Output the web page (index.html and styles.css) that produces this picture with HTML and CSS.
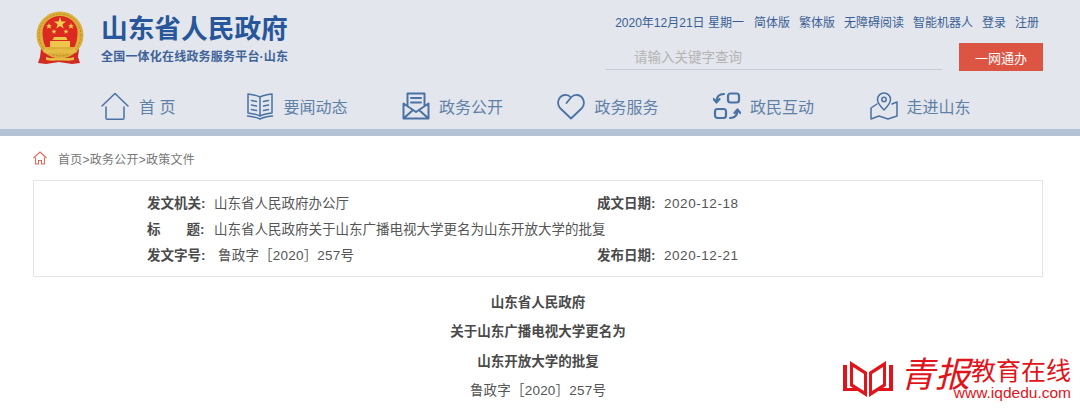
FILE: index.html
```html
<!DOCTYPE html>
<html lang="zh-CN">
<head>
  <meta charset="UTF-8" />
  <title>山东省人民政府</title>
  <link rel="stylesheet" href="styles.css">
</head>
<body>

  <!-- Header -->
  <header class="header">
    <div class="header-top">
      <svg class="emblem" viewBox="0 0 48 56">
        <path d="M5 38h38l-1 8 2 6-8 1-13-2-13 2-8-1 2-6z" fill="#d12a20"/>
        <circle cx="24" cy="24" r="23.500" fill="#dcae3c"/>
        <circle cx="24" cy="24" r="21" fill="none" stroke="#b98a25" stroke-width="1" stroke-dasharray="2 1.500"/>
        <path d="M6.500 21a17.500 16 0 0 1 35 0c0 6-1 11-3 15H9.500c-2-4-3-9-3-15z" fill="#dc2a20"/>
        <polygon points="24,6 25.500,10.500 30,10.500 26.400,13.200 27.700,17.600 24,15 20.300,17.600 21.600,13.200 18,10.500 22.500,10.500" fill="#f4d052"/>
        <polygon points="13,12 13.800,14.200 16,14.200 14.300,15.600 15,17.800 13,16.500 11,17.800 11.700,15.600 10,14.200 12.200,14.200" fill="#f4d052"/>
        <polygon points="35,12 35.800,14.200 38,14.200 36.300,15.600 37,17.800 35,16.500 33,17.800 33.700,15.600 32,14.200 34.200,14.200" fill="#f4d052"/>
        <polygon points="18,18 18.700,19.800 20.500,19.800 19.100,21 19.600,22.800 18,21.700 16.400,22.800 16.900,21 15.500,19.800 17.300,19.800" fill="#f4d052"/>
        <polygon points="30,18 30.700,19.800 32.500,19.800 31.100,21 31.600,22.800 30,21.700 28.400,22.800 28.900,21 27.500,19.800 29.300,19.800" fill="#f4d052"/>
        <path d="M18 26h12l1.500 3h-15zM14 30h20v6H14z" fill="#efc64c"/>
        <path d="M9 37c5 3 10 1 15 1s10 2 15-1l2 4c-5 3-11 1-17 1s-12 2-17-1z" fill="#e8bb45"/>
        <path d="M10 46c4 1.500 9 1 14 1s10 .5 14-1v3c-4 1-9 .5-14 .5s-10 .5-14-.5z" fill="#e8bb45"/>
      </svg>
      <div class="brand">
        <h1>山东省人民政府</h1>
        <p>全国一体化在线政务服务平台·山东</p>
      </div>
      <div class="tools">
        <div class="tool-links">
          <span class="today">2020年12月21日 星期一</span>
          <a>简体版</a>
          <a>繁体版</a>
          <a>无障碍阅读</a>
          <a>智能机器人</a>
          <a>登录</a>
          <a>注册</a>
        </div>
        <div class="search-row">
          <div class="search-box">请输入关键字查询</div>
          <button class="one-net">一网通办</button>
        </div>
      </div>
    </div>

    <nav class="nav">
      <a class="nav-item nav-home">
        <svg viewBox="0 0 28 28"><path d="M1 14L14 1.500 27 14M5 15v11c0 .8.500 1.200 1.200 1.200h15.600c.7 0 1.200-.4 1.200-1.200V15"/></svg>
        <span>首 页</span>
      </a>
      <a class="nav-item">
        <svg viewBox="0 0 28 28"><path d="M14 5C10 3 6 2.500 2 2v19c4 .5 8 1 12 3 4-2 8-2.500 12-3V2c-4 .5-8 1-12 3zM14 5v19M1.500 24c4 .5 8.500 1 12.500 3 4-2 8.500-2.500 12.500-3M5.500 8.500l5 1M5.500 13l5 1M5.500 17.500l5 1M17.500 9.500l5-1M17.500 14l5-1M17.500 18.500l5-1"/></svg>
        <span>要闻动态</span>
      </a>
      <a class="nav-item">
        <svg viewBox="0 0 28 28"><path d="M1.500 11.500v15h25v-15L14 20zM1.500 26.500L11 18M26.500 26.500L17 18M5.500 14V1.500h17V14M9 6h10M9 10.500h10" stroke-width="2"/></svg>
        <span>政务公开</span>
      </a>
      <a class="nav-item">
        <svg viewBox="0 0 28 28"><path d="M14 26.500L3 16C-.5 12 1 4 7.500 3c3-.4 5 .8 6.500 2.500L9.500 11M14 26.500L25 16c3.500-4 2-12-4.500-13-3-.4-5 .8-6.500 2.500" stroke-width="1.800"/></svg>
        <span>政务服务</span>
      </a>
      <a class="nav-item">
        <svg viewBox="0 0 28 28"><rect x="15" y="1.500" width="11" height="9" rx="2.500" stroke-width="2.200"/><rect x="2" y="17" width="11" height="9" rx="2.500" stroke-width="2.200"/><path d="M11 2C6 2 3.500 5 3.500 9.500M.5 7l3 3.500L6.500 7M17 26c5 0 7.500-3 7.500-7.500M21.500 21l3-3.500 3 3.500" stroke-width="2.200"/></svg>
        <span>政民互动</span>
      </a>
      <a class="nav-item nav-last">
        <svg viewBox="0 0 28 28"><path d="M14 18C10 14 7.500 11 7.500 7.500a6.500 6.500 0 0 1 13 0C20.500 11 18 14 14 18zM7 12l-6 4v11l8-3 9 3 9-3V10l-5 2"/><circle cx="14" cy="7.500" r="2.200"/></svg>
        <span>走进山东</span>
      </a>
    </nav>
  </header>

  <!-- Main Content -->
  <main class="content">
    <div class="crumbs">
      <svg class="crumb-icon" viewBox="0 0 14 14"><path d="M.5 7L7 1l6.500 6M2.500 6.500v6.500h3V9.500h3V13h3V6.500"/></svg>
      <span>首页&gt;政务公开&gt;政策文件</span>
    </div>

    <div class="info-box">
      <div class="info-row">
        <div class="info-cell"><b>发文机关:</b><span>山东省人民政府办公厅</span></div>
        <div class="info-cell"><b>成文日期:</b><span class="num">2020-12-18</span></div>
      </div>
      <div class="info-row">
        <div class="info-cell"><b class="spread"><i>标</i><i>题:</i></b><span>山东省人民政府关于山东广播电视大学更名为山东开放大学的批复</span></div>
      </div>
      <div class="info-row">
        <div class="info-cell"><b>发文字号:</b><span class="doc-no">鲁政字［2020］257号</span></div>
        <div class="info-cell"><b>发布日期:</b><span class="num">2020-12-21</span></div>
      </div>
    </div>

    <div class="doc-title">
      <p><b>山东省人民政府</b></p>
      <p><b>关于山东广播电视大学更名为</b></p>
      <p><b>山东开放大学的批复</b></p>
      <p class="doc-no-line">鲁政字［2020］257号</p>
    </div>
  </main>

  <!-- Watermark -->
  <div class="watermark">
    <svg class="wm-book" viewBox="0 0 50 40">
      <path d="M0 7h4v23h16v3H0zM50 7h-4v23H30v3h20z" fill="#e0141b"/>
      <path d="M7 3l17 11v25L7 28zM43 3L26 14v25l17-11z" fill="#e0141b"/>
      <path d="M10 9l11 7v17l-11-7zM40 9l-11 7v17l11-7z" fill="#fff"/>
    </svg>
    <div class="wm-script">青报</div>
    <div class="wm-right">
      <div class="wm-name">教育在线</div>
      <div class="wm-url">www.iqdedu.com</div>
    </div>
  </div>

</body>
</html>
```

FILE: styles.css
```css
* {
  box-sizing: border-box;
}

html, body {
  height: 100%;
  overflow: hidden;
}

body {
  margin: 0;
  background-color: #fff;
  color: #555;
  font-family: "Liberation Sans", "Noto Sans CJK SC", sans-serif;
  font-size: 13.5px;
}

.header {
  height: 136px;
  background-color: #e3e6ec;
  border-bottom: 7px solid #b3c3d5;
}

.header-top {
  display: flex;
  height: 79px;
  padding: 11px 37px 0 36px;
}

.emblem {
  width: 48px;
  height: 56px;
  flex: none;
  filter: blur(0.4px);
}

.brand {
  margin-left: 17px;
  padding-top: 1px;
  color: #27569a;
}

.brand h1 {
  margin: 0;
  font-size: 26.700px;
  line-height: 34px;
  font-weight: bold;
}

.brand p {
  margin: 3px 0 0;
  font-size: 12px;
  line-height: 16px;
  font-weight: bold;
  letter-spacing: 0.2px;
  color: #3d6398;
}

.tools {
  margin-left: auto;
  width: 438px;
}

.tool-links {
  display: flex;
  justify-content: flex-end;
  gap: 9px;
  padding-right: 4px;
  font-size: 12px;
  line-height: 24px;
  color: #3a5f96;
}

.today {
  margin-right: 1px;
}

.search-row {
  display: flex;
  align-items: flex-start;
  margin-top: 8px;
}

.search-box {
  width: 337px;
  height: 27px;
  padding-left: 29px;
  border-bottom: 1px solid #c3ccd8;
  color: #b4b4b4;
  font-size: 13.500px;
  line-height: 29px;
}

.one-net {
  width: 84px;
  height: 28px;
  margin-left: 17px;
  border: none;
  background-color: #dc5543;
  color: #fff;
  font-family: inherit;
  font-size: 13px;
}

.nav {
  display: flex;
  align-items: center;
  height: 50px;
  padding: 3px 0 0 101px;
}

.nav-item {
  display: flex;
  align-items: center;
  gap: 9px;
  margin-right: 54.500px;
  color: #5f81a8;
  font-size: 16px;
}

.nav-home {
  gap: 10px;
  margin-right: 71px;
}

.nav-last {
  margin-left: 1px;
}

.nav-item svg {
  width: 28px;
  height: 28px;
  flex: none;
  fill: none;
  stroke: #4a72a4;
  stroke-width: 1.500;
  stroke-linejoin: round;
  stroke-linecap: round;
}

.content {
  padding: 0 37px 0 33px;
}

.crumbs {
  display: flex;
  align-items: center;
  height: 44px;
  font-size: 12px;
  letter-spacing: 0.25px;
  color: #777;
}

.crumb-icon {
  width: 14px;
  height: 14px;
  margin-right: 11px;
  fill: none;
  stroke: #dc6a5c;
  stroke-width: 1.100;
}

.info-box {
  height: 97px;
  padding: 10px 0 0 113px;
  border: 1px solid #e4e4e4;
}

.info-row {
  display: flex;
  height: 26px;
  line-height: 26px;
}

.info-cell {
  display: flex;
  flex: none;
  width: 450px;
  white-space: nowrap;
}

.info-cell b {
  flex: none;
  width: 67px;
  color: #4a4a4a;
}

.info-cell .spread {
  display: flex;
  gap: 26px;
}

.info-cell i {
  font-style: normal;
}

.num {
  letter-spacing: 0.55px;
}

.doc-no {
  margin-left: 4px;
  letter-spacing: 0.2px;
}

.doc-title {
  margin-top: 11px;
  text-align: center;
}

.doc-title p {
  margin: 0;
  height: 29.400px;
  line-height: 29.400px;
}

.doc-title b {
  color: #4a4a4a;
}

.doc-no-line {
  letter-spacing: 0.2px;
}

.watermark {
  position: absolute;
  right: 9px;
  bottom: 7px;
  display: flex;
  align-items: flex-end;
  color: #e0141b;
}

.wm-book {
  width: 50px;
  height: 40px;
  margin-bottom: 3px;
}

.wm-script {
  width: 70px;
  margin-left: 7px;
  font-size: 35px;
  line-height: 52px;
  font-style: italic;
  white-space: nowrap;
}

.wm-right {
  width: 101px;
  text-align: right;
}

.wm-name {
  font-size: 25px;
  line-height: 28px;
  white-space: nowrap;
}

.wm-url {
  margin-left: -30px;
  font-size: 15.500px;
  line-height: 16px;
  white-space: nowrap;
}
```
